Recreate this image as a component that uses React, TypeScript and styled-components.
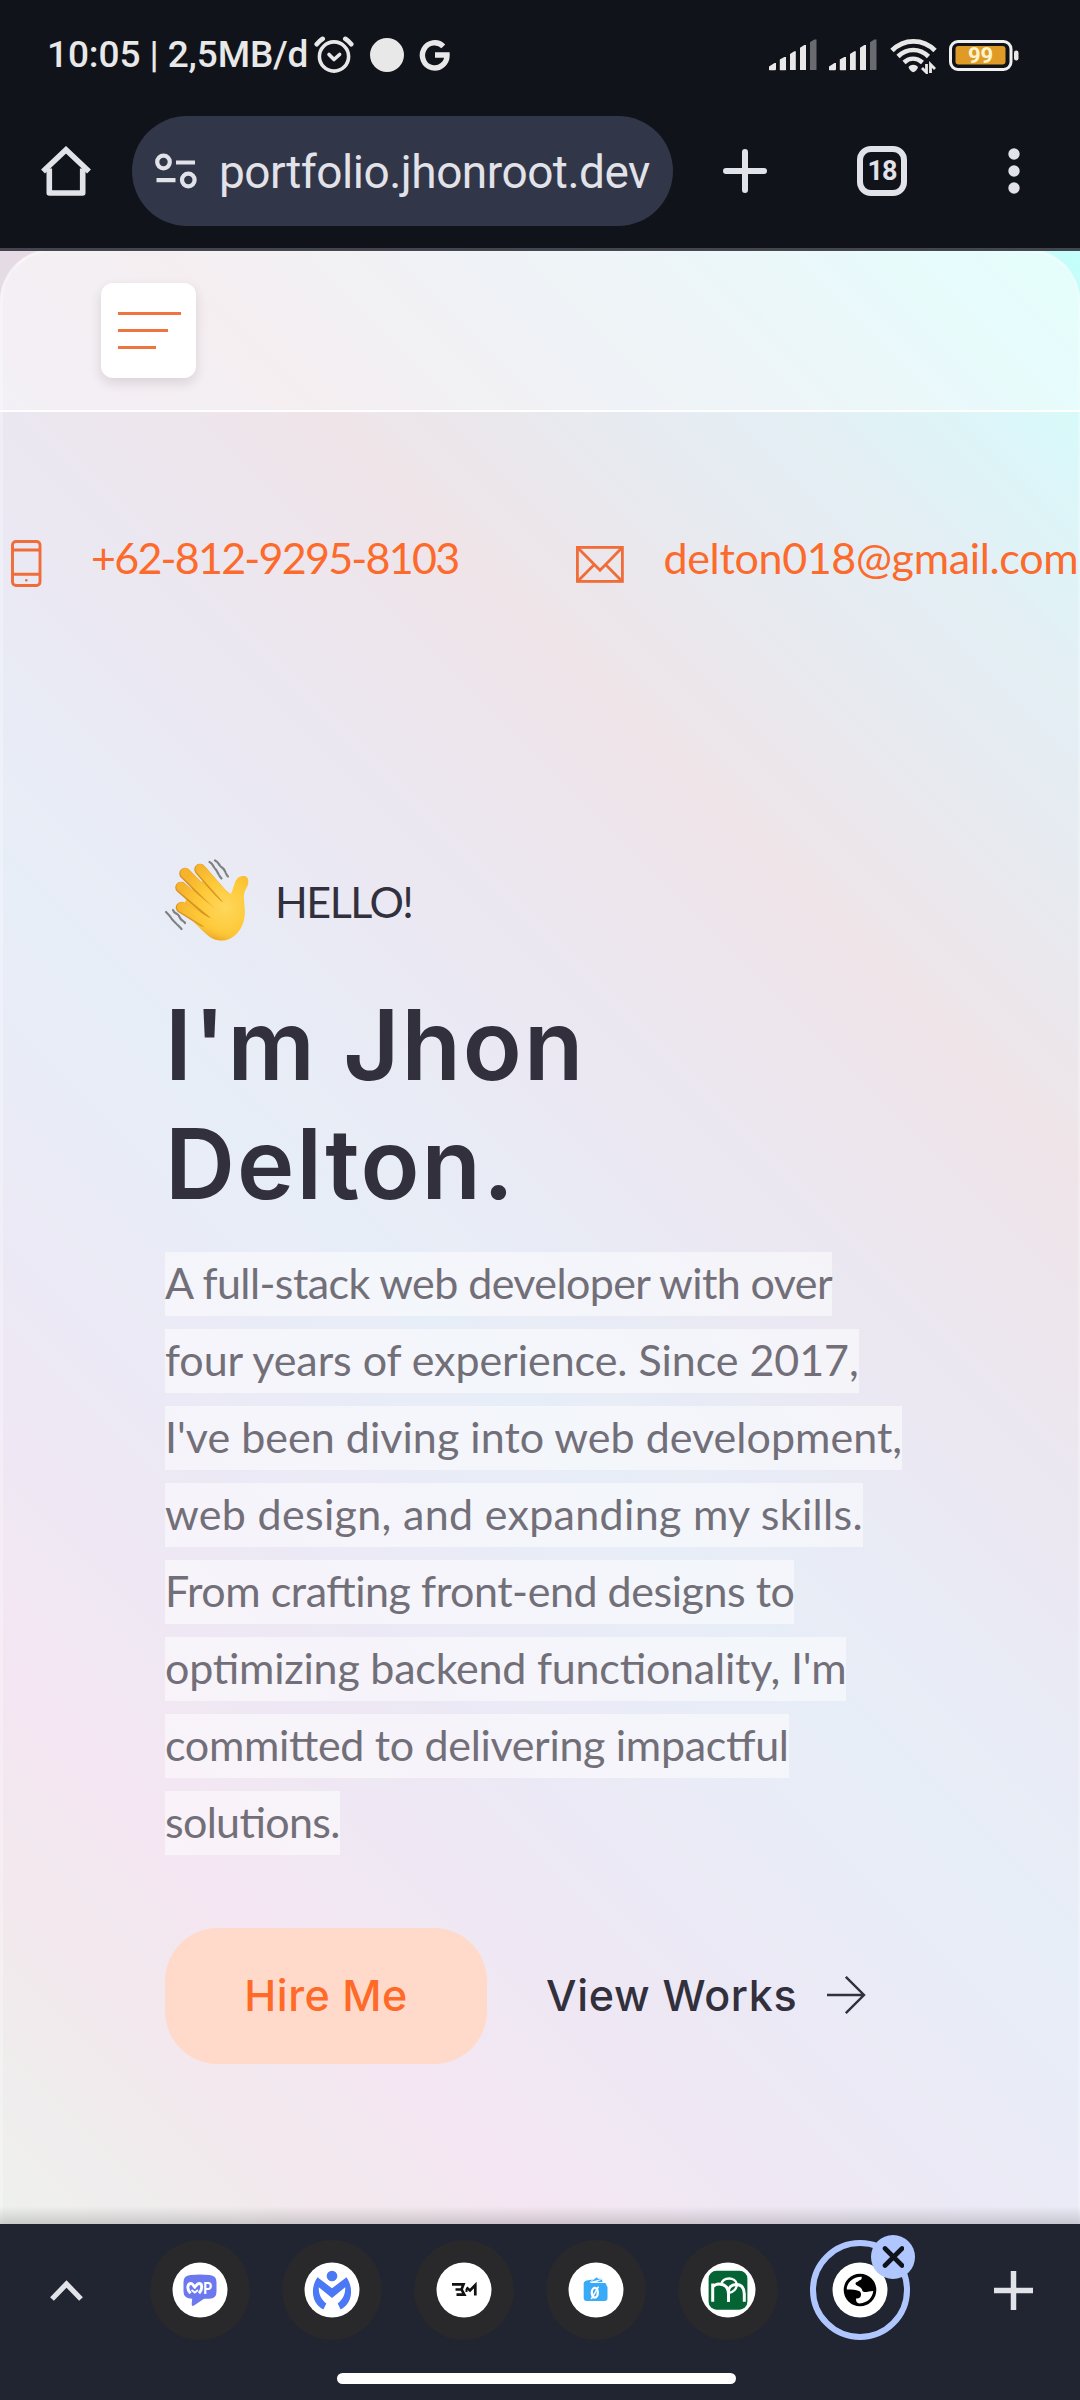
import React from "react";
import styled, { createGlobalStyle } from "styled-components";

const GlobalStyle = createGlobalStyle`
  * { box-sizing: border-box; }
  html, body { margin: 0; padding: 0; }
  body { width: 1080px; height: 2400px; overflow: hidden; background: #10131a; }
  svg { display: block; flex: none; }
  a { color: inherit; text-decoration: none; }
  button { border: 0; padding: 0; background: none; font: inherit; color: inherit; }
`;

const Screen = styled.div`
  width: 1080px;
  height: 2400px;
  display: flex;
  flex-direction: column;
  overflow: hidden;
  font-family: Roboto, "Liberation Sans", sans-serif;
`;

/* ---------- status bar ---------- */

const StatusBar = styled.header`
  height: 111px;
  padding: 0 61px 0 47px;
  display: flex;
  justify-content: space-between;
  align-items: flex-start;
  background: #10131a;
  color: #e8e8e8;
`;

const StatusGroup = styled.div<{ $gap?: number }>`
  height: 110px;
  display: flex;
  align-items: center;
  gap: ${(p) => p.$gap ?? 0}px;
`;

const Clock = styled.span`
  width: 267px;
  font-size: 37px;
  font-weight: 500;
  line-height: 44px;
  letter-spacing: -0.1px;
  white-space: nowrap;
`;

/* ---------- browser toolbar ---------- */

const Toolbar = styled.nav`
  height: 140px;
  display: flex;
  align-items: flex-start;
  padding-top: 5px;
  border-bottom: 3px solid #44464f;
  background: #10131a;
  color: #e2e2e9;
`;

const ToolCell = styled.button<{ $width: number }>`
  width: ${(p) => p.$width}px;
  height: 110px;
  display: flex;
  align-items: center;
  justify-content: center;
`;

const AddressBar = styled.div`
  width: 541px;
  height: 110px;
  padding: 0 0 0 22px;
  display: flex;
  align-items: center;
  gap: 21px;
  border-radius: 55px;
  background: #323649;
`;

const Url = styled.span`
  padding-top: 2px;
  font-size: 46px;
  line-height: 56px;
  letter-spacing: -0.5px;
  white-space: nowrap;
`;

const TabCount = styled.span`
  width: 50px;
  height: 50px;
  display: flex;
  align-items: center;
  justify-content: center;
  border: 6px solid #e2e2e9;
  border-radius: 14px;
  font-size: 27px;
  font-weight: 700;
  line-height: 30px;
  letter-spacing: -1px;
`;

/* ---------- page ---------- */

const Page = styled.main`
  height: 1973px;
  overflow: hidden;
  position: relative;
  background: linear-gradient(
    45deg,
    rgb(231, 235, 231) 0%,
    rgb(236, 223, 229) 11%,
    rgb(239, 220, 236) 17.5%,
    rgb(227, 224, 241) 32%,
    rgb(221, 231, 245) 44%,
    rgb(226, 222, 237) 57%,
    rgb(232, 217, 223) 70%,
    rgb(221, 226, 234) 79%,
    rgb(215, 233, 241) 86%,
    rgb(199, 248, 248) 95%,
    rgb(196, 255, 251) 100%
  );

  &::after {
    content: "";
    position: absolute;
    inset: auto 0 0 0;
    height: 18px;
    background: linear-gradient(to bottom, rgba(60, 60, 60, 0), rgba(60, 60, 60, 0.2));
  }
`;

const Sheet = styled.div`
  height: 1980px;
  border: 3px solid rgba(255, 255, 255, 0.25);
  border-right-width: 2px;
  border-top-color: rgba(255, 255, 255, 0.5);
  border-radius: 52px 52px 0 0;
  margin-top: -2px;
  background: rgba(255, 255, 255, 0.3);
`;

const PageHeader = styled.div`
  height: 160px;
  margin: 0 -2px 0 -3px;
  padding: 31px 0 0 101px;
  border-bottom: 2px solid #fff;
  border-radius: 50px 50px 0 0;
  background: rgba(255, 255, 255, 0.38);
`;

const MenuButton = styled.button`
  width: 95px;
  height: 95px;
  padding: 29px 0 0 17px;
  display: flex;
  flex-direction: column;
  gap: 14.5px;
  border-radius: 12px;
  background: #fff;
  box-shadow: 0 5px 12px rgba(60, 40, 50, 0.14);
`;

const MenuLine = styled.span<{ $width: number }>`
  width: ${(p) => p.$width}px;
  height: 2.6px;
  background: #ee7440;
`;

const Contacts = styled.div`
  margin: 116px 0 0 8px;
  height: 60px;
  display: flex;
  align-items: flex-start;
  color: #fc6a2c;
  font: 400 43px/60px Lato, "Open Sans", sans-serif;
  white-space: nowrap;
`;

const Contact = styled.a<{ $width?: number; $gap: number; $tracking: number }>`
  width: ${(p) => (p.$width ? p.$width + "px" : "auto")};
  display: flex;
  align-items: flex-start;
  gap: ${(p) => p.$gap}px;
  letter-spacing: ${(p) => p.$tracking}px;
  flex: none;
`;

const ContactIcon = styled.span<{ $top: number }>`
  padding-top: ${(p) => p.$top}px;
`;

const Hero = styled.section`
  padding: 270px 0 0 162px;
  color: #32303d;
`;

const Greeting = styled.div`
  height: 84px;
  display: flex;
  align-items: center;
  gap: 26px;
  font: 400 43px/60px Lato, "Open Sans", sans-serif;
  letter-spacing: -1.5px;
`;

const GreetingText = styled.span`
  padding-top: 3px;
`;

const Name = styled.h1`
  margin: 43px 0 0;
  width: 600px;
  font: 560 97px/119px Inter, "Open Sans", sans-serif;
  letter-spacing: 2px;
`;

const Bio = styled.p`
  margin: 29px 0 0;
  display: flex;
  flex-direction: column;
  align-items: flex-start;
  gap: 13px;
  color: #726f79;
  font: 400 43px/61px Lato, "Open Sans", sans-serif;
  font-feature-settings: "liga" 1;
`;

const BioLine = styled.span<{ $tracking: number }>`
  height: 64px;
  background: rgba(255, 255, 255, 0.5);
  letter-spacing: ${(p) => p.$tracking}px;
  white-space: nowrap;
`;

const Actions = styled.div`
  margin-top: 73px;
  display: flex;
  align-items: center;
  gap: 59px;
  font: 550 43px/60px Inter, "Open Sans", sans-serif;
  letter-spacing: 0.7px;
`;

const HireButton = styled.button`
  width: 322px;
  height: 136px;
  padding-bottom: 3px;
  border-radius: 53px;
  background: #ffdaca;
  color: #ff6a28;
  letter-spacing: 0.5px;
`;

const WorksLink = styled.a`
  display: flex;
  align-items: center;
  gap: 30px;
  padding-bottom: 3px;
`;

/* ---------- bottom tab strip ---------- */

const TabStrip = styled.footer`
  height: 176px;
  display: flex;
  flex-direction: column;
  align-items: center;
  background: #212531;
`;

const TabRow = styled.div`
  width: 1080px;
  height: 132px;
  display: flex;
  align-items: center;
`;

const StripButton = styled.button<{ $width: number; $shift?: number }>`
  width: ${(p) => p.$width}px;
  padding-left: ${(p) => p.$shift ?? 0}px;
  display: flex;
  justify-content: center;
`;

const TabCell = styled.div`
  width: 132px;
  display: flex;
  justify-content: center;
`;

const TabCircle = styled.div<{ $active?: boolean }>`
  position: relative;
  width: 100px;
  height: 100px;
  display: flex;
  align-items: center;
  justify-content: center;
  border-radius: 50%;
  border: ${(p) => (p.$active ? "6px solid #b0c6ff" : "0")};
  background: ${(p) => (p.$active ? "transparent" : "#29292b")};
`;

const CloseBadge = styled.span`
  position: absolute;
  left: 55px;
  top: -11px;
  width: 44px;
  height: 44px;
  display: flex;
  align-items: center;
  justify-content: center;
  border-radius: 50%;
  background: #b0c6ff;
`;

const HomeIndicator = styled.div`
  margin: 17px 7px 0 0;
  width: 399px;
  height: 11px;
  border-radius: 6px;
  background: #fff;
`;

/* ---------- icons ---------- */

const AlarmIcon = () => (
  <svg width="40" height="38" viewBox="0 0 40 38" fill="none" stroke="#e8e8e8" strokeLinecap="round" strokeLinejoin="round">
    <circle cx="20" cy="20.5" r="14.6" strokeWidth="3.6" />
    <path d="M15 18.5l5 5 5.6-5" strokeWidth="3.6" />
    <path d="M2.7 8.2C4.5 6 6.4 4.3 8.700 2.800M31.300 2.800c2.300 1.500 4.200 3.200 6 5.400" strokeWidth="4.6" />
  </svg>
);

const DotIcon = () => (
  <svg width="34" height="34" viewBox="0 0 34 34"><circle cx="17" cy="17" r="17" fill="#e8e8e8" /></svg>
);

const GIcon = () => (
  <svg width="31" height="32" viewBox="0 0 31 32" fill="none" stroke="#e8e8e8" strokeWidth="5.4">
    <path d="M24.300 7.400A12.300 12.600 0 1 0 28 16H16" />
  </svg>
);

const SignalIcon = () => (
  <svg width="48" height="32" viewBox="0 0 48 32" fill="#e8e8e8">
    <path d="M0 31v-3.500L5.500 24H7v6.500l-.8.700H.8z" />
    <path d="M10.800 31V20.500l4.500-2.600h1.700v13l-.8.300h-4.600z" />
    <path d="M21 31V15l4.300-2.800h1.500V31z" />
    <path d="M31 31V8.800L35.300 6H37v25z" />
    <path d="M41 31V3.300L45.300.5H47.500V31z" fill="#6a6b70" />
  </svg>
);

const WifiIcon = () => (
  <svg width="47" height="37" viewBox="0 0 47 37" fill="none" stroke="#e8e8e8">
    <path d="M2 13.500C14 1.200 33 1.200 45 13.500" strokeWidth="4.800" />
    <path d="M8 19.500c9-8.700 21.500-8.700 30.500 0" strokeWidth="4.600" />
    <path d="M14 25.500c5.500-5 12.500-5 18.500 0" strokeWidth="4.600" />
    <path d="M18.500 30c2.500-3 7-3 9.500 0-.5 2.700-2.500 4.500-4.700 5.300-2.300-.8-4.300-2.600-4.800-5.300z" fill="#e8e8e8" stroke="none" />
    <path d="M36.500 27v8.500l-4.500-4.500M40.500 36v-8.500l4.500 4.500" strokeWidth="2.800" />
  </svg>
);

const BatteryIcon = () => (
  <svg width="70" height="31" viewBox="0 0 70 31">
    <rect x="1.500" y="1.500" width="60.500" height="28" rx="7.500" fill="none" stroke="#f0f0f0" strokeWidth="3" />
    <rect x="6.500" y="6" width="50" height="18.500" rx="3" fill="#e09b26" />
    <rect x="65" y="10.500" width="4.500" height="10" rx="2.200" fill="#e8e8e8" />
    <text x="31.500" y="23.300" textAnchor="middle" fontFamily="Roboto, sans-serif" fontWeight="700" fontSize="22" fill="#fff3d2">99</text>
  </svg>
);

const HomeIcon = () => (
  <svg width="50" height="50" viewBox="0 0 50 50" fill="none" stroke="#e2e2e9" strokeWidth="5.600" strokeLinejoin="round">
    <path d="M2 25.500L25 3.800 48 25.500" strokeLinejoin="miter" strokeWidth="5.600" />
    <path d="M8.300 22.500V47h33.400V22.500" />
  </svg>
);

const TuneIcon = () => (
  <svg width="44" height="36" viewBox="0 0 44 36" fill="none" stroke="#e2e2e9" strokeWidth="4.200">
    <circle cx="9.500" cy="9" r="6.300" />
    <path d="M22 9.500h19M2.500 27.200h19" />
    <circle cx="34.300" cy="27" r="6.300" />
  </svg>
);

const PlusIcon = ({ size, weight, round }: { size: number; weight: number; round?: boolean }) => (
  <svg width={size} height={size} viewBox={`0 0 ${size} ${size}`} stroke="#e2e2e9" strokeWidth={weight} strokeLinecap={round ? "round" : "butt"}>
    <path d={round ? `M${size / 2} 3V${size - 3}M3 ${size / 2}H${size - 3}` : `M${size / 2} 0V${size}M0 ${size / 2}H${size}`} />
  </svg>
);

const MoreIcon = () => (
  <svg width="12" height="46" viewBox="0 0 12 46" fill="#e2e2e9">
    <circle cx="6" cy="6" r="5.700" /><circle cx="6" cy="23" r="5.700" /><circle cx="6" cy="40" r="5.700" />
  </svg>
);

const PhoneIcon = () => (
  <svg width="31" height="47" viewBox="0 0 31 47" fill="none" stroke="#f06c38" strokeWidth="2.900">
    <rect x="1.500" y="1.500" width="27.500" height="44" rx="3.500" />
    <path d="M1.300 10h28M1.300 34.300h28" />
    <circle cx="15.300" cy="40.300" r="1.300" fill="#f06c38" stroke="none" />
  </svg>
);

const MailIcon = () => (
  <svg width="48" height="37" viewBox="0 0 48 37" fill="none" stroke="#f06c38" strokeWidth="2.800">
    <rect x="1.400" y="1.400" width="45" height="34" />
    <path d="M1.500 1.500L24 24.300 46.300 1.500M1.500 35.500l16.800-17M46.300 35.500L29.500 18.500" />
  </svg>
);

const ArrowIcon = () => (
  <svg width="39" height="38" viewBox="0 0 39 38" fill="none" stroke="#32303d" strokeWidth="2.400">
    <path d="M0 19h37M18.800.8L37 19 18.800 37.200" />
  </svg>
);

const WavingHand = () => (
  <svg width="84" height="83" viewBox="0 0 84 83" fill="none" strokeLinecap="round">
    <defs>
      <radialGradient id="skin" gradientUnits="userSpaceOnUse" cx="60" cy="48" r="48">
        <stop offset="0" stopColor="#ffd75c" />
        <stop offset="0.550" stopColor="#fdc938" />
        <stop offset="1" stopColor="#f6b32c" />
      </radialGradient>
      <linearGradient id="palmShade" x1="0.800" y1="0.300" x2="0.400" y2="1">
        <stop offset="0.500" stopColor="#ffcf45" stopOpacity="0" />
        <stop offset="1" stopColor="#dd8a10" stopOpacity="0.800" />
      </linearGradient>
    </defs>
    <path d="M17 48C24 59 36 71 45 78c8 5.500 19 4.500 26-2.500 8-8 10-18 8.300-31-.6-6-.8-11 2.200-15.500C84 25 84 19 81 17.500c-4-1.500-9 .5-10.800 5.500L66 35 44 19 30 26z" fill="url(#skin)" />
    <g stroke="#d99320" strokeWidth="11.500">
      <path d="M35 10.500L58 37" />
      <path d="M20 14.500L50 45" />
      <path d="M16 28.500L44 53" />
      <path d="M16.500 48.500L38 62" />
    </g>
    <g stroke="url(#skin)" strokeWidth="9.800">
      <path d="M35.300 10L61 39" />
      <path d="M20.300 14L54 47" />
      <path d="M16.300 28L50 56" />
      <path d="M16.800 48L48 67" />
    </g>
    <path d="M17 48C24 59 36 71 45 78c8 5.500 19 4.500 26-2.500 8-8 10-18 8.300-31L60 50z" fill="url(#palmShade)" />
    <g stroke="#808080" strokeWidth="2.200" strokeDasharray="7 1.500">
      <path d="M44.500 3c4 2 3 4 5.500 6.500s3 6 6.500 10" />
      <path d="M50 1.500c4.500 2 3.500 5 7 7s3 6 6 9" />
      <path d="M1 53c3 3 4 4 5.500 6.500s6 6 10 10.500" />
      <path d="M8 51c1 4 5 3 6.500 7s4 3.500 5.500 6" />
    </g>
  </svg>
);

const ChevronUp = () => (
  <svg width="33" height="21" viewBox="0 0 33 21" fill="none" stroke="#e2e2e9" strokeWidth="5.200">
    <path d="M2 19L16.500 4 31 19" />
  </svg>
);

const CloseIcon = () => (
  <svg width="22" height="22" viewBox="0 0 22 22" stroke="#10131a" strokeWidth="4.600" strokeLinecap="round">
    <path d="M3 2.500l17 17M20 2.500l-17 17" />
  </svg>
);

const Favicon = ({ children }: { children: React.ReactNode }) => (
  <svg width="56" height="56" viewBox="-28 -28 56 56" fill="none">
    <circle r="27.500" fill="#fff" />
    {children}
  </svg>
);

const ChatLogo = () => (
  <Favicon>
    <path d="M-9.500-15Q0-16 9.500-15 16.500-14.500 16.500-8V1.500Q16.500 8.500 9.500 8.800H4L-6 15.500Q-8.500 17-8.300 13.500L-7.800 8.700Q-16.500 8.500-16.500 1.500V-8Q-16.500-14.500-9.500-15z" fill="#6b78ee" />
    <path d="M-9.500 3.300C-14-1.500-12-6.500-9-6.500-7.200-6.500-6.500-4-5.200-2.800-4-4-3-6.500-1-6.500 2.200-6.500 3-1.500-1 3.300" stroke="#fff" strokeWidth="2.900" />
    <path d="M-8.500 0L-5.200 2.500-2 0" stroke="#fff" strokeWidth="1.800" />
    <text x="3.300" y="4" fontFamily="Roboto, sans-serif" fontWeight="700" fontSize="16.500" textLength="9" lengthAdjust="spacingAndGlyphs" fill="#fff">P</text>
  </Favicon>
);

const PersonLogo = () => (
  <Favicon>
    <circle cy="-14" r="5.300" fill="#4b78f5" />
    <path d="M-14.500-12.700L0-1.700 14.500-12.700C22-2 20.500 13.500 8.600 19.500L5.700 13.500C11 9.500 13.500 4 13.200-2.700L0 8-13.200-2.700C-13.500 4-11 9.500-5.700 13.500L-8.600 19.500C-20.500 13.500-22-2-14.500-12.700z" fill="#4b78f5" />
  </Favicon>
);

const MonogramLogo = () => (
  <Favicon>
    <path d="M-12-5.700H-.5L-2.500-.5 .3 4.700H-7.500M-8.500-.5H-1.500M2.500-2.500L6 .5 11.300-5V5.500" stroke="#111" strokeWidth="2.700" />
    <path d="M2.500 2V-1" stroke="#111" strokeWidth="2" />
  </Favicon>
);

const WalletLogo = () => (
  <Favicon>
    <path d="M-12.300-7Q-12-9-9.500-9.500L-3-10.500-6-7H9Q10.500-7 10.500-4.500L11.500-3V8Q11.500 11 8.500 11H-9.300Q-12.300 11-12.300 8z" fill="#38aaf8" />
    <path d="M-6-8L1-13.200 2-11.500 6-11.700 7-7.500H-1L6-11" fill="#38aaf8" stroke="#fff" strokeWidth=".7" />
    <ellipse cx="-1.200" cy="2.700" rx="3" ry="4.800" stroke="#fff" strokeWidth="2.300" />
    <path d="M2.500-3.300L-4.700 9" stroke="#fff" strokeWidth="1.500" />
  </Favicon>
);

const GreenLogo = () => (
  <Favicon>
    <rect x="-19.400" y="-19.300" width="38.800" height="39" rx="8" fill="#046434" />
    <g stroke="#fff" strokeWidth="3">
      <path d="M-15.300 11.700V-6.500M-15.300-3C-11-8 .5-7 .5 4V11.700" />
      <path d="M.5 11.700V1C1-5 8-6.500 11.500-5 15-3.500 16.300 0 16.300 4V11.700" />
      <path d="M-7-5.500C-5-13.500 7.500-13.500 9-5.500 8.500-1 5 2 1 3" strokeWidth="2.300" />
    </g>
  </Favicon>
);

const GlobeLogo = () => (
  <Favicon>
    <circle r="16.300" fill="#000" />
    <path d="M-13.200-2.500C-11.500-9-6-13 1.500-13.200 2.500-11 .5-10-1-9.500-2-8-4.500-8-4.500-6.500-4.500-3.500 1.500-4.500 2.500 1 4 3 8 1.500 13.300 1 12.500 7.500 8 12.700-.5 13.500-3 13 -4 12-4 8.500 0 8.500 1 7 1 4 1 1-1.500-.5-13.200-.5z" fill="#fff" />
  </Favicon>
);

const bio: { text: string; tracking: number }[] = [
  { text: "A full-stack web developer with over", tracking: -0.59 },
  { text: "four years of experience. Since 2017,", tracking: -0.05 },
  { text: "I've been diving into web development,", tracking: 0.026 },
  { text: "web design, and expanding my skills.", tracking: 0.32 },
  { text: "From crafting front-end designs to", tracking: -0.456 },
  { text: "optimizing backend functionality, I'm", tracking: -0.219 },
  { text: "committed to delivering impactful", tracking: -0.32 },
  { text: "solutions.", tracking: -0.68 },
];

const tabs = [ChatLogo, PersonLogo, MonogramLogo, WalletLogo, GreenLogo, GlobeLogo];

export default function App() {
  return (
    <Screen>
      <GlobalStyle />
      <StatusBar>
        <StatusGroup>
          <Clock>10:05 | 2,5MB/d</Clock>
          <StatusGroup $gap={15.5}>
            <AlarmIcon />
            <DotIcon />
            <GIcon />
          </StatusGroup>
        </StatusGroup>
        <StatusGroup $gap={12.5}>
          <SignalIcon />
          <SignalIcon />
          <WifiIcon />
          <BatteryIcon />
        </StatusGroup>
      </StatusBar>

      <Toolbar>
        <ToolCell $width={132}><HomeIcon /></ToolCell>
        <AddressBar>
          <TuneIcon />
          <Url>portfolio.jhonroot.dev</Url>
        </AddressBar>
        <ToolCell $width={144}><PlusIcon size={44} weight={6} round /></ToolCell>
        <ToolCell $width={130}><TabCount>18</TabCount></ToolCell>
        <ToolCell $width={133}><MoreIcon /></ToolCell>
      </Toolbar>

      <Page>
        <Sheet>
          <PageHeader>
            <MenuButton>
              <MenuLine $width={63} />
              <MenuLine $width={50} />
              <MenuLine $width={38} />
            </MenuButton>
          </PageHeader>
          <Contacts>
            <Contact $width={565} $gap={49} $tracking={-1.75}>
              <ContactIcon $top={12}><PhoneIcon /></ContactIcon>
              +62-812-9295-8103
            </Contact>
            <Contact $gap={39.5} $tracking={-0.33}>
              <ContactIcon $top={18}><MailIcon /></ContactIcon>
              delton018@gmail.com
            </Contact>
          </Contacts>
          <Hero>
            <Greeting>
              <WavingHand />
              <GreetingText>HELLO!</GreetingText>
            </Greeting>
            <Name>I'm Jhon Delton.</Name>
            <Bio>
              {bio.map((line) => (
                <BioLine key={line.text} $tracking={line.tracking}>{line.text}</BioLine>
              ))}
            </Bio>
            <Actions>
              <HireButton>Hire Me</HireButton>
              <WorksLink>View Works<ArrowIcon /></WorksLink>
            </Actions>
          </Hero>
        </Sheet>
      </Page>

      <TabStrip>
        <TabRow>
          <StripButton $width={133.5}><ChevronUp /></StripButton>
          {tabs.map((Logo, i) => {
            const active = i === tabs.length - 1;
            return (
              <TabCell key={i}>
                <TabCircle $active={active}>
                  <Logo />
                  {active && <CloseBadge><CloseIcon /></CloseBadge>}
                </TabCircle>
              </TabCell>
            );
          })}
          <StripButton $width={154.5} $shift={22}><PlusIcon size={39} weight={5.5} /></StripButton>
        </TabRow>
        <HomeIndicator />
      </TabStrip>
    </Screen>
  );
}
